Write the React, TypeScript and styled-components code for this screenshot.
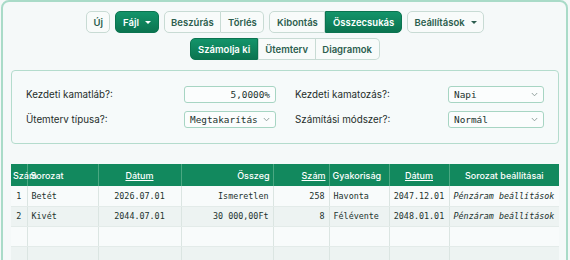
import React from 'react';
import styled, { createGlobalStyle, css } from 'styled-components';

const GlobalStyle = createGlobalStyle`
    html, body {
        margin: 0;
        padding: 0;
        background: #f4f8f8;
        font-family: Inter, "Noto Sans", sans-serif;
    }
`;

const Frame = styled.div`
    margin: 0 2px 0 1px;
    min-height: 320px;
    border: 2px solid #a9dbc8;
    border-radius: 8px;
    background: #f5f9f9;
    padding: 9px 7px 0 8px;
    box-sizing: border-box;
`;

const Toolbar = styled.div`
    display: flex;
    justify-content: center;
    gap: 5px;
    margin-bottom: 5px;
`;

const Group = styled.div`
    display: flex;
`;

const Btn = styled.button<{ $active?: boolean }>`
    height: 22px;
    padding: 0 6.6px;
    display: flex;
    align-items: center;
    gap: 6px;
    font-family: Inter, sans-serif;
    font-size: 9.5px;
    font-weight: 600;
    color: #2c5e4e;
    background: #f8fbfa;
    border: 1px solid #c8dbd4;
    border-radius: 5px;
    cursor: pointer;

    ${Group} > & {
        border-radius: 0;
    }
    ${Group} > &:first-child {
        border-radius: 5px 0 0 5px;
    }
    ${Group} > &:last-child {
        border-radius: 0 5px 5px 0;
    }
    ${Group} > & + & {
        border-left: none;
    }

    ${(p) => p.$active && css`
        color: #ffffff;
        background: linear-gradient(180deg, #13946a 0%, #0b7450 100%);
        border-color: #0b7450;
    `}
`;

const Caret = styled.span`
    width: 0;
    height: 0;
    border-left: 3px solid transparent;
    border-right: 3px solid transparent;
    border-top: 3px solid currentColor;
`;

const Panel = styled.div`
    margin-top: 10px;
    border: 1px solid #b4dccd;
    border-radius: 4px;
    background: #f6fafa;
    padding: 15px 14px 15px 14px;
    display: grid;
    grid-template-columns: 158px 92px 1fr 96px;
    column-gap: 0;
    row-gap: 8px;
    align-items: center;
`;

const Label = styled.div<{ $right?: boolean }>`
    font-size: 9.8px;
    color: #1f2e2a;
    ${(p) => p.$right && css`padding-left: 19px;`}
`;

const Field = styled.div<{ $align?: string }>`
    height: 17px;
    box-sizing: border-box;
    border: 1px solid #a7d5c3;
    border-radius: 3px;
    background: #fbfdfd;
    display: flex;
    align-items: center;
    justify-content: ${(p) => p.$align || 'space-between'};
    padding: 0 5px 0 5px;
    font-family: "DejaVu Sans Mono", monospace;
    font-size: 9.4px;
    color: #22322e;
`;

const Chevron = () => (
    <svg width="7" height="5" viewBox="0 0 7 5" fill="none">
        <path d="M0.8 1 L3.5 3.8 L6.2 1" stroke="#8a9a96" strokeWidth="0.9" />
    </svg>
);

const Table = styled.table`
    margin-top: 20px;
    width: 548px;
    border-collapse: collapse;
    table-layout: fixed;
`;

const Th = styled.th<{ $align?: string; $link?: boolean }>`
    height: 22px;
    padding: 0 3px;
    background: #12895e;
    color: #ffffff;
    font-family: Inter, sans-serif;
    font-size: 9px;
    font-weight: 500;
    text-align: ${(p) => p.$align || 'left'};
    white-space: nowrap;
    border-left: 1px solid #4aa882;
    text-decoration: ${(p) => (p.$link ? 'underline' : 'none')};
    &:first-child {
        border-left: none;
        padding: 0 2px;
    }
`;

const Tr = styled.tr<{ $alt?: boolean }>`
    height: 20px;
    background: ${(p) => (p.$alt ? '#edf3f2' : '#f8fbfb')};
`;

const Td = styled.td<{ $align?: string; $italic?: boolean }>`
    padding: 0 4px;
    font-family: "DejaVu Sans Mono", monospace;
    font-size: 8.4px;
    color: #22322e;
    text-align: ${(p) => p.$align || 'left'};
    font-style: ${(p) => (p.$italic ? 'italic' : 'normal')};
    white-space: nowrap;
    border-left: 1px solid #dbe5e2;
    border-bottom: 1px solid #e3ebe9;
    &:first-child {
        border-left: none;
        padding: 0;
        text-align: center;
    }
`;

const rows = [
    { n: '1', name: 'Betét', date: '2026.07.01', amount: 'Ismeretlen', count: '258', freq: 'Havonta', end: '2047.12.01' },
    { n: '2', name: 'Kivét', date: '2044.07.01', amount: '30 000,00Ft', count: '8', freq: 'Félévente', end: '2048.01.01' },
    null,
    null,
];

const App = () => {
    return (
        <>
            <GlobalStyle />
            <Frame>
                <Toolbar>
                    <Btn>Új</Btn>
                    <Btn $active>Fájl <Caret /></Btn>
                    <Group>
                        <Btn>Beszúrás</Btn>
                        <Btn>Törlés</Btn>
                    </Group>
                    <Group>
                        <Btn>Kibontás</Btn>
                        <Btn $active>Összecsukás</Btn>
                    </Group>
                    <Btn>Beállítások <Caret /></Btn>
                </Toolbar>
                <Toolbar>
                    <Group>
                        <Btn $active>Számolja ki</Btn>
                        <Btn>Ütemterv</Btn>
                        <Btn>Diagramok</Btn>
                    </Group>
                </Toolbar>

                <Panel>
                    <Label>Kezdeti kamatláb?:</Label>
                    <Field $align="flex-end">5,0000%</Field>
                    <Label $right>Kezdeti kamatozás?:</Label>
                    <Field>Napi <Chevron /></Field>
                    <Label>Ütemterv típusa?:</Label>
                    <Field>Megtakarítás <Chevron /></Field>
                    <Label $right>Számítási módszer?:</Label>
                    <Field>Normál <Chevron /></Field>
                </Panel>

                <Table>
                    <colgroup>
                        <col style={{ width: 16 }} />
                        <col style={{ width: 71 }} />
                        <col style={{ width: 83 }} />
                        <col style={{ width: 92 }} />
                        <col style={{ width: 56 }} />
                        <col style={{ width: 60 }} />
                        <col style={{ width: 60 }} />
                        <col style={{ width: 110 }} />
                    </colgroup>
                    <thead>
                        <tr>
                            <Th>Szám</Th>
                            <Th>Sorozat</Th>
                            <Th $align="center" $link>Dátum</Th>
                            <Th $align="right">Összeg</Th>
                            <Th $align="right" $link>Szám</Th>
                            <Th>Gyakoriság</Th>
                            <Th $align="center" $link>Dátum</Th>
                            <Th $align="center">Sorozat beállításai</Th>
                        </tr>
                    </thead>
                    <tbody>
                        {rows.map((r, i) => (
                            <Tr key={i} $alt={i % 2 === 1}>
                                <Td>{r?.n}</Td>
                                <Td>{r?.name}</Td>
                                <Td $align="center">{r?.date}</Td>
                                <Td $align="right">{r?.amount}</Td>
                                <Td $align="right">{r?.count}</Td>
                                <Td>{r?.freq}</Td>
                                <Td $align="center">{r?.end}</Td>
                                <Td $italic>{r ? 'Pénzáram beállítások' : ''}</Td>
                            </Tr>
                        ))}
                    </tbody>
                </Table>
            </Frame>
        </>
    );
};

export default App;
